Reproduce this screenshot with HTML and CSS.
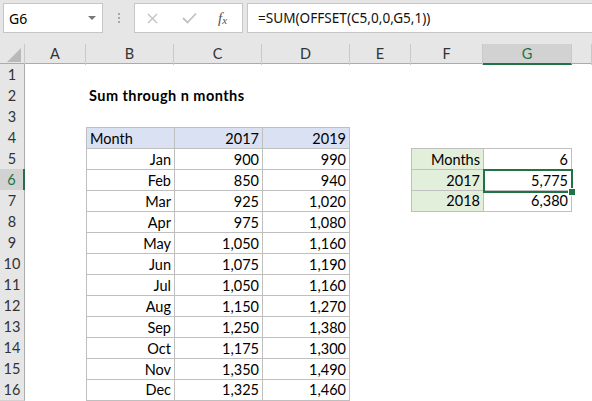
FILE: index.html
```html
<!DOCTYPE html>
<html lang="en">
<head>
    <meta charset="UTF-8">
    <title>Sum through n months</title>
    <link rel="stylesheet" href="styles.css">
</head>
<body>
    <div class="topbar">
        <div class="namebox">
            <span>G6</span>
            <svg class="caret" width="8" height="4" viewBox="0 0 8 4"><polygon points="0,0 8,0 4,4" fill="#777"/></svg>
        </div>
        <div class="grip"><i></i><i></i><i></i></div>
        <div class="fxbtns">
            <svg class="cancel" width="11" height="11" viewBox="0 0 11 11"><path d="M1 1 L10 10 M10 1 L1 10" stroke="#c2c2c2" stroke-width="1.4" fill="none"/></svg>
            <svg class="enter" width="15" height="12" viewBox="0 0 15 12"><path d="M1 6 L5.5 10.5 L14 1.5" stroke="#c2c2c2" stroke-width="1.8" fill="none"/></svg>
            <span class="fx">f<sub>x</sub></span>
        </div>
        <div class="formula">=SUM(OFFSET(C5,0,0,G5,1))</div>
    </div>

    <div class="sheet">
        <div class="row colhdr">
            <div class="corner"><svg width="14" height="14" viewBox="0 0 14 14"><polygon points="14,0 14,14 0,14" fill="#b9b9b9"/></svg></div>
            <div class="ch">A</div><div class="ch">B</div><div class="ch">C</div><div class="ch">D</div>
            <div class="ch">E</div><div class="ch">F</div><div class="ch active">G</div><div class="ch"></div>
        </div>

        <div class="row"><div class="rh">1</div><div></div><div></div><div></div><div></div><div></div><div></div><div></div><div></div></div>
        <div class="row"><div class="rh">2</div><div></div><div class="c title">Sum through n months</div><div></div><div></div><div></div><div></div><div></div><div></div></div>
        <div class="row"><div class="rh">3</div><div></div><div></div><div></div><div></div><div></div><div></div><div></div><div></div></div>

        <div class="row"><div class="rh">4</div><div></div>
            <div class="c t top head">Month</div><div class="c t top head num">2017</div><div class="c t top end head num">2019</div>
            <div></div><div></div><div></div><div></div></div>

        <div class="row"><div class="rh">5</div><div></div>
            <div class="c t num">Jan</div><div class="c t num">900</div><div class="c t end num">990</div>
            <div></div><div class="c t top lbl num">Months</div><div class="c t top end num">6</div><div></div></div>
        <div class="row"><div class="rh active">6</div><div></div>
            <div class="c t num">Feb</div><div class="c t num">850</div><div class="c t end num">940</div>
            <div></div><div class="c t lbl num">2017</div><div class="c t end num sel">5,775</div><div></div></div>
        <div class="row"><div class="rh">7</div><div></div>
            <div class="c t num">Mar</div><div class="c t num">925</div><div class="c t end num">1,020</div>
            <div></div><div class="c t bot lbl num">2018</div><div class="c t bot end num">6,380</div><div></div></div>
        <div class="row"><div class="rh">8</div><div></div>
            <div class="c t num">Apr</div><div class="c t num">975</div><div class="c t end num">1,080</div>
            <div></div><div></div><div></div><div></div></div>
        <div class="row"><div class="rh">9</div><div></div>
            <div class="c t num">May</div><div class="c t num">1,050</div><div class="c t end num">1,160</div>
            <div></div><div></div><div></div><div></div></div>
        <div class="row"><div class="rh">10</div><div></div>
            <div class="c t num">Jun</div><div class="c t num">1,075</div><div class="c t end num">1,190</div>
            <div></div><div></div><div></div><div></div></div>
        <div class="row"><div class="rh">11</div><div></div>
            <div class="c t num">Jul</div><div class="c t num">1,050</div><div class="c t end num">1,160</div>
            <div></div><div></div><div></div><div></div></div>
        <div class="row"><div class="rh">12</div><div></div>
            <div class="c t num">Aug</div><div class="c t num">1,150</div><div class="c t end num">1,270</div>
            <div></div><div></div><div></div><div></div></div>
        <div class="row"><div class="rh">13</div><div></div>
            <div class="c t num">Sep</div><div class="c t num">1,250</div><div class="c t end num">1,380</div>
            <div></div><div></div><div></div><div></div></div>
        <div class="row"><div class="rh">14</div><div></div>
            <div class="c t num">Oct</div><div class="c t num">1,175</div><div class="c t end num">1,300</div>
            <div></div><div></div><div></div><div></div></div>
        <div class="row"><div class="rh">15</div><div></div>
            <div class="c t num">Nov</div><div class="c t num">1,350</div><div class="c t end num">1,490</div>
            <div></div><div></div><div></div><div></div></div>
        <div class="row"><div class="rh">16</div><div></div>
            <div class="c t bot num">Dec</div><div class="c t bot num">1,325</div><div class="c t bot end num">1,460</div>
            <div></div><div></div><div></div><div></div></div>
    </div>
</body>
</html>
```

FILE: styles.css
```css
* { margin: 0; padding: 0; box-sizing: border-box; }
html, body { width: 592px; height: 401px; overflow: hidden; background: #fff; }
body { font-family: Lato, "Liberation Sans", sans-serif; color: #000; }

/* formula bar */
.topbar { height: 44px; background: #e6e6e6; display: flex; align-items: flex-start; padding: 3px 0 0 3px; font-family: "Noto Sans", sans-serif; font-size: 13.2px; }
.namebox { width: 100px; height: 30px; background: #fff; border: 1px solid #c6c6c6; display: flex; align-items: center; justify-content: space-between; padding: 0 6px 0 5px; font-size: 14px; }
.grip { width: 31px; height: 30px; display: flex; flex-direction: column; align-items: center; justify-content: center; gap: 2px; }
.grip i { width: 2px; height: 2px; background: #a8a8a8; display: block; }
.fxbtns { width: 109px; height: 30px; background: #fff; border: 1px solid #c6c6c6; display: flex; align-items: center; padding-left: 12px; }
.enter { margin-left: 24px; }
.fx { margin-left: 21px; font-family: "Liberation Serif", serif; font-style: italic; font-size: 15px; color: #555; }
.fx sub { font-size: 11px; vertical-align: -1px; }
.formula { flex: 1; height: 30px; margin-left: 4px; background: #fff; border: 1px solid #c6c6c6; border-right: none; padding-left: 10px; line-height: 28px; color: #111; font-size: 13.6px; }

/* grid */
.sheet { font-size: 14.5px; }
.row { display: grid; grid-template-columns: 25px 61px 88px 88px 88px 61px 72px 89px 1fr; height: 21px; }
.colhdr { height: 20px; background: #e6e6e6; border-bottom: 1px solid #ababab; }
.corner { display: flex; align-items: flex-end; justify-content: flex-end; padding: 0 3px 3px 0; border-right: 1px solid #c9c9c9; }
.ch { border-right: 1px solid #c9c9c9; text-align: center; line-height: 20px; color: #333; }
.ch.active { background: #d2d2d2; color: #217346; border-bottom: 2px solid #217346; height: 21px; }
.rh { background: #e6e6e6; border-right: 1px solid #ababab; border-bottom: 1px solid #d2d2d2; text-align: center; padding-top: 1px; line-height: 20px; color: #333; }
.rh.active { background: #d2d2d2; color: #217346; border-right: 2px solid #217346; }

/* cells */
.c { line-height: 20px; padding: 1px 3px 0; white-space: nowrap; }
.num { text-align: right; }
.title { font-weight: bold; letter-spacing: 0.45px; overflow: visible; }
.t { border-left: 1px solid #bfbfbf; border-top: 1px solid #bfbfbf; line-height: 19px; }
.t.end { border-right: 1px solid #bfbfbf; }
.t.bot { border-bottom: 1px solid #bfbfbf; line-height: 18px; }
.head { background: #d9e1f2; }
.lbl { background: #e2efda; }

/* active cell */
.sel { position: relative; }
.sel::before { content: ""; position: absolute; left: -1px; top: -1px; right: -2px; bottom: -2px; border: 2px solid #217346; }
.sel::after { content: ""; position: absolute; right: -5px; bottom: -5px; width: 6px; height: 6px; background: #217346; border: 1px solid #fff; }
```
